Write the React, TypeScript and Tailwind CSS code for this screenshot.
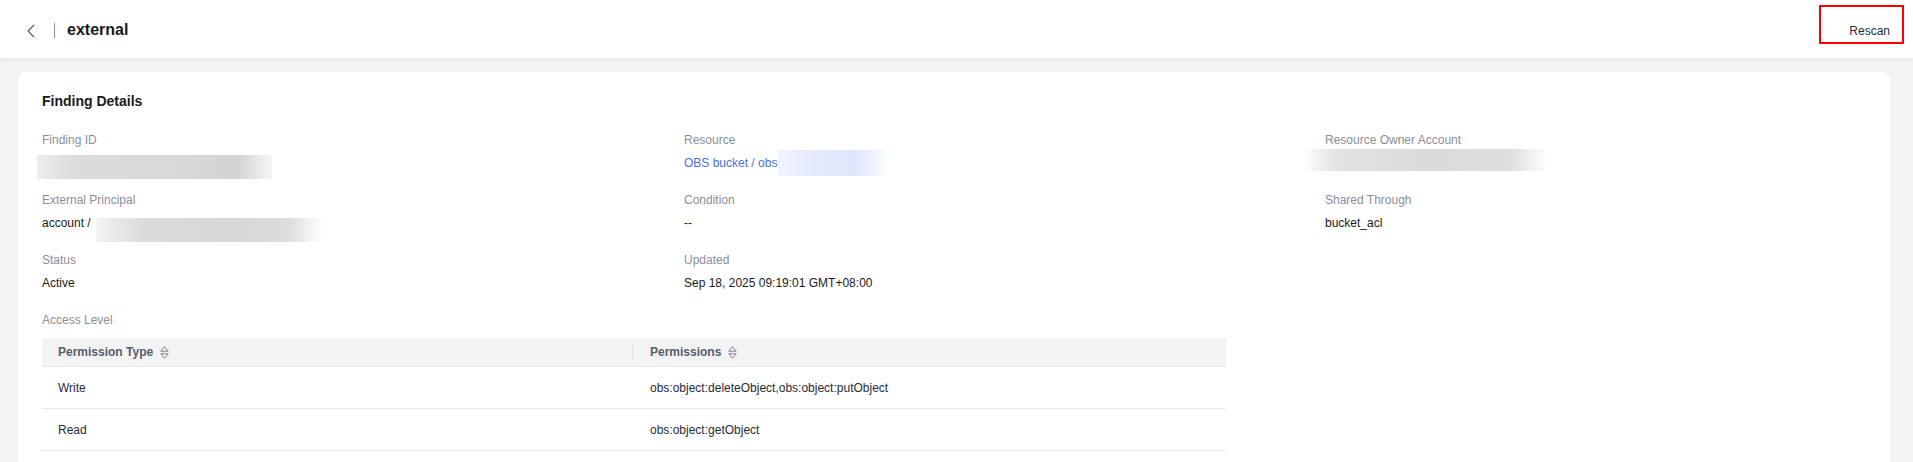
import type { ReactNode } from 'react';

const SortIcon = () => (
  <svg width="9" height="13" viewBox="0 0 9 13" fill="none" className="ml-[7px]">
    <path d="M4.5 0.8 L8.2 5.2 H0.8 Z" stroke="#7a7f8c" strokeWidth="1" strokeLinejoin="round" />
    <path d="M0.8 7.8 H8.2 L4.5 12.2 Z" stroke="#7a7f8c" strokeWidth="1" strokeLinejoin="round" />
  </svg>
);

interface FieldProps {
  label: string;
  children: ReactNode;
}

const Field = ({ label, children }: FieldProps) => (
  <div>
    <div className="text-[12px] leading-[18px] text-[#8a8e99]">{label}</div>
    <div className="mt-[5px] flex h-[18px] items-start text-[12px] leading-[18px] text-[#191919]">{children}</div>
  </div>
);

const rows = [
  { type: 'Write', perms: 'obs:object:deleteObject,obs:object:putObject' },
  { type: 'Read', perms: 'obs:object:getObject' },
];

export default function App() {
  return (
    <div className="min-h-screen bg-[#f3f3f3] font-['Liberation_Sans',Arial,sans-serif] text-[#191919]">
      {/* top bar */}
      <header className="flex h-[58px] items-start justify-between bg-white pl-[27px] pr-[9px] shadow-[0_2px_4px_rgba(0,0,0,0.05)]">
        <div className="mt-[20px] flex items-center">
          <svg width="8" height="14" viewBox="0 0 8 14" fill="none" className="mt-[2px]">
            <path d="M7 1 L1 7 L7 13" stroke="#575d6c" strokeWidth="1.2" />
          </svg>
          <span className="ml-[19px] h-[15px] w-px bg-[#8a8e99]" />
          <h1 className="ml-[12px] text-[16px] font-bold leading-[20px] text-[#191919]">external</h1>
        </div>
        <div className="mt-[5px] flex h-[39px] w-[85px] items-end justify-end border-2 border-[#ff0000] pb-[2px] pr-[12px] text-[12px] leading-[18px] text-[#252b3a]">
          Rescan
        </div>
      </header>

      {/* details card */}
      <div className="ml-[18px] mr-[23px] mt-[14px] rounded-lg bg-white px-[24px] pb-[24px] pt-[19px]">
        <h2 className="text-[14px] font-bold leading-[20px] text-[#191919]">Finding Details</h2>

        <div className="mt-[20px] grid grid-cols-[642px_641px_1fr] gap-y-[19px]">
          <Field label="Finding ID">
            <div className="-ml-[5px] mt-[1px] h-[24px] w-[235px] shrink-0 bg-[linear-gradient(90deg,#ededed_0%,#dcdcdc_15%,#d9d9d9_55%,#d3d3d3_85%,#f6f6f6_100%)]" />
          </Field>
          <Field label="Resource">
            <span className="text-[#4a70e0]">OBS bucket / obs</span>
            <div className="-mt-[4px] ml-[1px] h-[26px] w-[109px] shrink-0 bg-[linear-gradient(90deg,#f0f4fd_0%,#e3eafc_35%,#dde6fb_70%,#fbfcff_100%)]" />
          </Field>
          <Field label="Resource Owner Account">
            <div className="-ml-[20px] -mt-[5px] h-[22px] w-[242px] shrink-0 bg-[linear-gradient(90deg,#ffffff_0%,#e3e3e3_12%,#dbdbdb_50%,#dedede_85%,#ffffff_100%)]" />
          </Field>

          <Field label="External Principal">
            <span>account /</span>
            <div className="ml-[5px] mt-[4px] h-[24px] w-[227px] shrink-0 bg-[linear-gradient(90deg,#f3f3f3_0%,#dcdcdc_20%,#d6d6d6_60%,#dddddd_85%,#ffffff_100%)]" />
          </Field>
          <Field label="Condition">--</Field>
          <Field label="Shared Through">bucket_acl</Field>

          <Field label="Status">Active</Field>
          <Field label="Updated">Sep 18, 2025 09:19:01 GMT+08:00</Field>
          <div />
        </div>

        <div className="mt-[19px] text-[12px] leading-[18px] text-[#8a8e99]">Access Level</div>

        <div className="mt-[9px] w-[1184px] text-[12px] leading-[18px]">
          <div className="grid h-[29px] grid-cols-2 border-b border-[#ebebeb] bg-[#f3f3f3] font-bold text-[#575d6c]">
            <div className="flex items-center justify-between pl-[16px]">
              <div className="flex items-center">
                Permission Type
                <SortIcon />
              </div>
              <span className="mr-[1px] h-[15px] w-px bg-[#dfe1e6]" />
            </div>
            <div className="flex items-center pl-[16px]">
              Permissions
              <SortIcon />
            </div>
          </div>
          {rows.map((r) => (
            <div key={r.type} className="grid h-[42px] grid-cols-2 border-b border-[#e8e8e8] text-[#252b3a]">
              <div className="flex items-center pl-[16px]">{r.type}</div>
              <div className="flex items-center pl-[16px]">{r.perms}</div>
            </div>
          ))}
        </div>
      </div>
    </div>
  );
}
